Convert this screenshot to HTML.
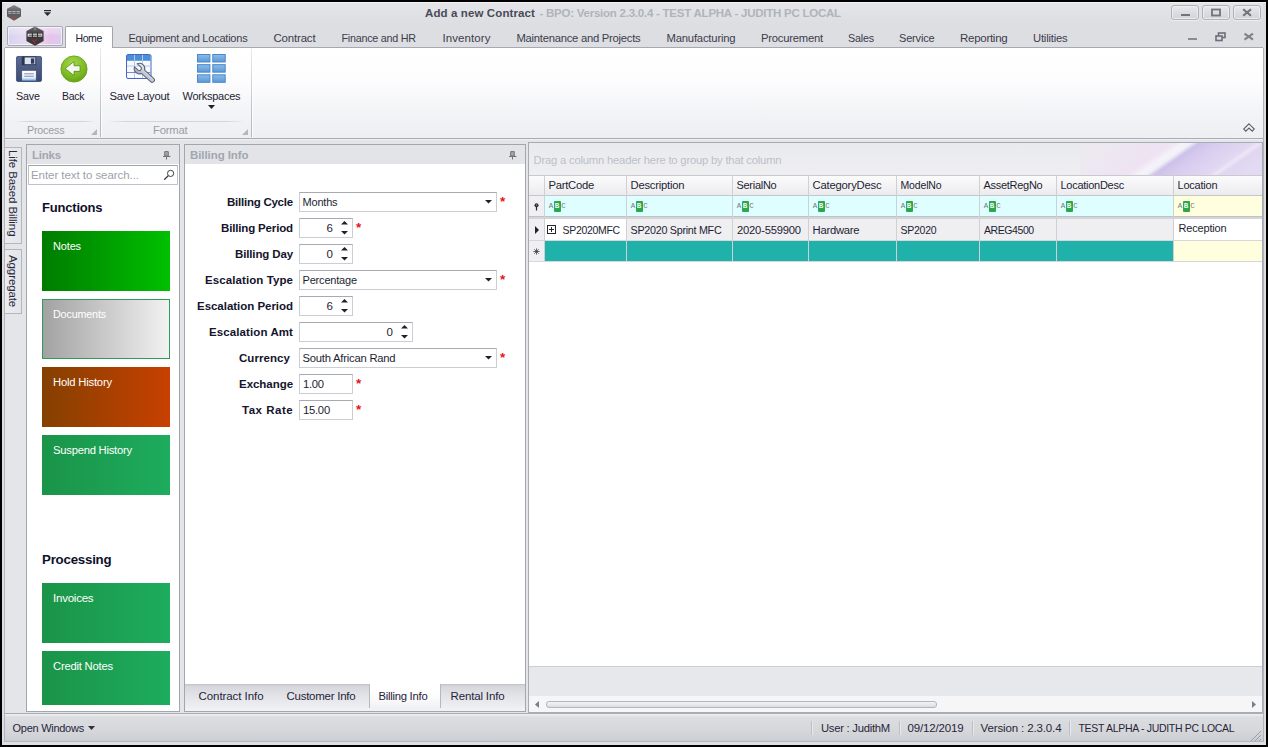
<!DOCTYPE html>
<html><head><meta charset="utf-8"><title>Add a new Contract - BPO</title>
<style>
html,body{margin:0;padding:0;}
body{width:1268px;height:747px;background:#000;overflow:hidden;position:relative;font-family:"Liberation Sans",sans-serif;}
.t{position:absolute;white-space:nowrap;font-family:"Liberation Sans",sans-serif;}
svg{position:absolute;overflow:visible}
</style></head><body>
<div style="position:absolute;left:2px;top:2px;width:1264px;height:743px;background:#dddee2;"></div>
<div style="position:absolute;left:2px;top:2px;width:1264px;height:1px;background:#f2f2f4;"></div>
<div style="position:absolute;left:4px;top:48px;width:1px;height:694px;background:#b2b4bb;"></div>
<div style="position:absolute;left:1263px;top:48px;width:1px;height:694px;background:#b2b4bb;"></div>
<div style="position:absolute;left:2px;top:742px;width:1264px;height:3px;background:#dfe0e4;"></div>
<div style="position:absolute;left:5px;top:3px;width:1258px;height:24px;background:linear-gradient(180deg,#e4e5e8,#dcdde1);"></div>
<svg style="left:5px;top:4px" width="18" height="18" viewBox="0 0 18 18"><defs><linearGradient id="hx" x1="0" y1="0" x2="0" y2="1"><stop offset="0" stop-color="#8e8e90"/><stop offset=".45" stop-color="#5a5a5c"/><stop offset=".6" stop-color="#5c5c5e"/><stop offset="1" stop-color="#745c5a"/></linearGradient></defs><polygon points="9,1 16,4.8 16,12.6 9,16.8 2,12.6 2,4.8" fill="url(#hx)"/><rect x="3.2" y="7.3" width="3.4" height="2.2" fill="#d8d8da"/><rect x="7.3" y="7.3" width="3.4" height="2.2" fill="#d8d8da"/><rect x="11.4" y="7.3" width="3.4" height="2.2" fill="#d8d8da"/><rect x="3.2" y="8" width="11.6" height=".8" fill="#5a5a5c"/><path d="M7.5 12 L9 13.6 L10.5 11.8" stroke="#a8483c" stroke-width="1" fill="none"/></svg>
<svg style="left:43px;top:9px" width="9" height="8" viewBox="0 0 9 8"><rect x="1" y="1" width="7" height="1.2" fill="#26262e"/><polygon points="1,3.2 8,3.2 4.5,7" fill="#26262e"/></svg>
<div class="t" style="left:425px;top:5.5px;height:14px;line-height:14px;font-size:11.5px;font-weight:bold;color:#4a4a58;letter-spacing:0.116px;">Add a new Contract</div>
<div class="t" style="left:539.5px;top:5.5px;height:14px;line-height:14px;font-size:11.5px;font-weight:bold;color:#b0b3bb;letter-spacing:-0.241px;">- BPO: Version 2.3.0.4 - TEST ALPHA - JUDITH PC LOCAL</div>
<div style="position:absolute;left:1171px;top:5px;width:28px;height:15px;border:1px solid #b0b2b9;border-radius:3px;background:linear-gradient(180deg,#e8e9ec,#dcdde1 50%,#d3d4d8);box-sizing:border-box;box-shadow:inset 0 0 0 1px rgba(240,240,243,.8), 0 1px 0 rgba(240,240,243,.8);"></div>
<div style="position:absolute;left:1202px;top:5px;width:28px;height:15px;border:1px solid #b0b2b9;border-radius:3px;background:linear-gradient(180deg,#e8e9ec,#dcdde1 50%,#d3d4d8);box-sizing:border-box;box-shadow:inset 0 0 0 1px rgba(240,240,243,.8), 0 1px 0 rgba(240,240,243,.8);"></div>
<div style="position:absolute;left:1233px;top:5px;width:28px;height:15px;border:1px solid #b0b2b9;border-radius:3px;background:linear-gradient(180deg,#e8e9ec,#dcdde1 50%,#d3d4d8);box-sizing:border-box;box-shadow:inset 0 0 0 1px rgba(240,240,243,.8), 0 1px 0 rgba(240,240,243,.8);"></div>
<svg style="left:1181px;top:14px" width="10" height="4"><rect x="0" y="0" width="9" height="2" fill="#70727c"/></svg>
<svg style="left:1211px;top:8px" width="11" height="9"><rect x="1" y="1.5" width="8" height="6" fill="none" stroke="#70727c" stroke-width="1.8"/></svg>
<svg style="left:1242px;top:8px" width="10" height="9" viewBox="0 0 10 9"><path d="M1.2 1.2 L9 7.8 M9 1.2 L1.2 7.8" stroke="#70727c" stroke-width="2.1"/></svg>
<div style="position:absolute;left:5px;top:27px;width:1258px;height:21px;background:#dddee2;"></div>
<div style="position:absolute;left:5px;top:47px;width:1258px;height:1px;background:#a6a9b1;"></div>
<div style="position:absolute;left:7px;top:26px;width:56px;height:20px;border:1px solid #a8aab2;border-radius:2px;box-sizing:border-box;background:linear-gradient(180deg,rgba(255,255,255,.35) 0%,rgba(255,255,255,.15) 40%,rgba(255,255,255,0) 45%),linear-gradient(95deg,#d8d2f0 0%,#e4daf2 30%,#ecd6f0 55%,#e6c4ea 78%,#dacdf0 100%);box-shadow:inset 0 0 0 1px rgba(255,255,255,.6);"></div>
<svg style="left:25px;top:25px" width="20" height="22" viewBox="0 0 20 22"><defs><linearGradient id="hx2" x1="0" y1="0" x2="0" y2="1"><stop offset="0" stop-color="#6c6c6e"/><stop offset=".4" stop-color="#3e3e40"/><stop offset="1" stop-color="#3c3436"/></linearGradient></defs><polygon points="10,1.4 18.6,6 18.6,16 10,20.8 1.4,16 1.4,6" fill="url(#hx2)"/><rect x="9.6" y="1.6" width=".9" height="4" fill="#9a9a9c"/><rect x="2.2" y="8" width="15.6" height="4.2" fill="#1e1e20"/><rect x="2.6" y="8.6" width="4.3" height="3" fill="#fafafa"/><rect x="7.8" y="8.6" width="4.3" height="3" fill="#fafafa"/><rect x="13" y="8.6" width="4.3" height="3" fill="#fafafa"/><rect x="3.6" y="9.7" width="13" height=".9" fill="#2a2a2c"/><path d="M7 14.5 L9.5 17.5 L11.5 14 M9 18 L10.5 19" stroke="#c02c34" stroke-width=".9" fill="none"/></svg>
<div style="position:absolute;left:65px;top:26px;width:48px;height:22px;background:#fff;border:1px solid #a2a5ad;border-bottom:none;border-radius:2px 2px 0 0;box-sizing:border-box;"></div>
<div class="t" style="left:75.5px;top:31.0px;height:14px;line-height:14px;font-size:10.5px;color:#24243a;letter-spacing:-0.431px;">Home</div>
<div class="t" style="left:128.5px;top:31.0px;height:14px;line-height:14px;font-size:11.0px;color:#3c3c4c;letter-spacing:-0.228px;">Equipment and Locations</div>
<div class="t" style="left:273.5px;top:31.0px;height:14px;line-height:14px;font-size:11.5px;color:#3c3c4c;letter-spacing:-0.195px;">Contract</div>
<div class="t" style="left:341.5px;top:31.0px;height:14px;line-height:14px;font-size:10.75px;color:#3c3c4c;letter-spacing:-0.235px;">Finance and HR</div>
<div class="t" style="left:442.5px;top:31.0px;height:14px;line-height:14px;font-size:11.5px;color:#3c3c4c;letter-spacing:0.082px;">Inventory</div>
<div class="t" style="left:516.5px;top:31.0px;height:14px;line-height:14px;font-size:11.25px;color:#3c3c4c;letter-spacing:-0.258px;">Maintenance and Projects</div>
<div class="t" style="left:666.5px;top:31.0px;height:14px;line-height:14px;font-size:11.25px;color:#3c3c4c;letter-spacing:-0.183px;">Manufacturing</div>
<div class="t" style="left:761px;top:31.0px;height:14px;line-height:14px;font-size:11.25px;color:#3c3c4c;letter-spacing:-0.228px;">Procurement</div>
<div class="t" style="left:848px;top:31.0px;height:14px;line-height:14px;font-size:10.75px;color:#3c3c4c;letter-spacing:-0.198px;">Sales</div>
<div class="t" style="left:899px;top:31.0px;height:14px;line-height:14px;font-size:11.0px;color:#3c3c4c;letter-spacing:-0.181px;">Service</div>
<div class="t" style="left:960px;top:31.0px;height:14px;line-height:14px;font-size:11.5px;color:#3c3c4c;letter-spacing:-0.278px;">Reporting</div>
<div class="t" style="left:1033px;top:31.0px;height:14px;line-height:14px;font-size:11.25px;color:#3c3c4c;letter-spacing:-0.206px;">Utilities</div>
<svg style="left:1188px;top:38px" width="10" height="3"><rect width="9" height="2" fill="#8a8c94"/></svg>
<svg style="left:1215px;top:32px" width="11" height="10" viewBox="0 0 11 10"><rect x="3.5" y="1" width="6.5" height="4.5" fill="none" stroke="#6c6e78" stroke-width="1.6"/><rect x="1" y="4" width="6" height="4.5" fill="#dddee2" stroke="#6c6e78" stroke-width="1.6"/></svg>
<svg style="left:1243px;top:32px" width="11" height="9" viewBox="0 0 11 9"><path d="M1.5 1.6 L10 7.6 M10 1.6 L1.5 7.6" stroke="#80828a" stroke-width="2"/></svg>
<div style="position:absolute;left:5px;top:48px;width:1258px;height:90px;background:linear-gradient(180deg,#ffffff 0%,#fdfdfe 35%,#f1f2f5 80%,#eeeff2 100%);"></div>
<div style="position:absolute;left:5px;top:138px;width:1258px;height:1px;background:#a9acb3;"></div>
<div style="position:absolute;left:5px;top:139px;width:1258px;height:1px;background:#eeeff1;"></div>
<div style="position:absolute;left:100px;top:48px;width:1px;height:89px;background:linear-gradient(180deg,#ececef,#c4c6cc 60%,#b4b6bd);"></div>
<div style="position:absolute;left:101px;top:48px;width:1px;height:89px;background:rgba(255,255,255,.8);"></div>
<div style="position:absolute;left:251px;top:48px;width:1px;height:89px;background:linear-gradient(180deg,#ececef,#c4c6cc 60%,#b4b6bd);"></div>
<div style="position:absolute;left:252px;top:48px;width:1px;height:89px;background:rgba(255,255,255,.8);"></div>
<div style="position:absolute;left:15px;top:121px;width:81px;height:1px;background:linear-gradient(90deg,rgba(200,202,208,0),#d4d5da 15%,#d4d5da 85%,rgba(200,202,208,0));"></div>
<div style="position:absolute;left:106px;top:121px;width:140px;height:1px;background:linear-gradient(90deg,rgba(200,202,208,0),#d4d5da 15%,#d4d5da 85%,rgba(200,202,208,0));"></div>
<div class="t" style="left:27px;top:123.0px;height:14px;line-height:14px;font-size:10.75px;color:#9a9ca6;letter-spacing:-0.205px;">Process</div>
<div class="t" style="left:153px;top:123.0px;height:14px;line-height:14px;font-size:11.25px;color:#9a9ca6;letter-spacing:-0.205px;">Format</div>
<svg style="left:91px;top:129px" width="6" height="6"><polygon points="6,0 6,6 0,6" fill="#b4b6be"/></svg>
<svg style="left:242px;top:129px" width="6" height="6"><polygon points="6,0 6,6 0,6" fill="#b4b6be"/></svg>
<div class="t" style="left:16px;top:89.0px;height:14px;line-height:14px;font-size:10.75px;color:#1e1e32;letter-spacing:-0.143px;">Save</div>
<div class="t" style="left:62px;top:89.0px;height:14px;line-height:14px;font-size:10.5px;color:#1e1e32;letter-spacing:-0.241px;">Back</div>
<div class="t" style="left:109.5px;top:89.0px;height:14px;line-height:14px;font-size:11.25px;color:#1e1e32;letter-spacing:-0.242px;">Save Layout</div>
<div class="t" style="left:182.5px;top:89.0px;height:14px;line-height:14px;font-size:11.0px;color:#1e1e32;letter-spacing:-0.244px;">Workspaces</div>
<svg style="left:208px;top:105px" width="7" height="4"><polygon points="0,0 7,0 3.5,4" fill="#20202a"/></svg>
<svg style="left:1243px;top:123px" width="12" height="10" viewBox="0 0 12 10"><path d="M6 .8 L11.3 6 L9.2 8.2 L6 5 L2.8 8.2 L.7 6 Z" fill="#f4f4f7" stroke="#5e606a" stroke-width="1.1" stroke-linejoin="miter"/></svg>
<svg style="left:16px;top:56px" width="26" height="26" viewBox="0 0 27 27">
<defs><linearGradient id="fl" x1="0" y1="0" x2="0" y2="1"><stop offset="0" stop-color="#5a6a92"/><stop offset="1" stop-color="#3c4a70"/></linearGradient>
<linearGradient id="lb" x1="0" y1="0" x2="0" y2="1"><stop offset="0" stop-color="#ffffff"/><stop offset=".7" stop-color="#e8f0fa"/><stop offset="1" stop-color="#5aa0dc"/></linearGradient></defs>
<rect x="0.5" y="0.5" width="26" height="26" rx="1.5" fill="url(#fl)" stroke="#4a5880"/>
<rect x="6" y="0.5" width="15" height="9" fill="#2c3450"/>
<rect x="9" y="1.5" width="11" height="7" fill="#dfe3ee"/><rect x="15.5" y="2.5" width="3.5" height="5.5" fill="#303a5c"/>
<rect x="6" y="15" width="15" height="11" fill="url(#lb)" stroke="#3a4668" stroke-width=".6"/>
<rect x="8.5" y="18" width="10" height="1" fill="#7a8cb4"/><rect x="8.5" y="20.5" width="10" height="1" fill="#7a8cb4"/>
</svg>
<svg style="left:60px;top:55px" width="28" height="28" viewBox="0 0 30 30">
<defs><radialGradient id="gb" cx=".45" cy=".3" r=".8"><stop offset="0" stop-color="#a6d84a"/><stop offset=".6" stop-color="#7cba24"/><stop offset="1" stop-color="#5a9612"/></radialGradient></defs>
<circle cx="15" cy="15" r="14" fill="url(#gb)" stroke="#6aa41c" stroke-width="1"/>
<path d="M5.5 14.5 L15 7 L15 11.5 L21.5 11.5 L21.5 17.5 L15 17.5 L15 22 Z" fill="#f4f8ec" stroke="#4e8410" stroke-width=".8"/>
</svg>
<svg style="left:125px;top:53px" width="32" height="32" viewBox="0 0 32 32">
<defs><linearGradient id="wr" x1="0" y1="0" x2="0" y2="1"><stop offset="0" stop-color="#e8ecf2"/><stop offset="1" stop-color="#a4acba"/></linearGradient></defs>
<rect x="1.5" y="1.5" width="24.5" height="24" rx="1.5" fill="#f6f9fd" stroke="#4c62c2"/>
<rect x="2" y="2" width="23.5" height="5.8" fill="#4a90d8"/>
<path d="M2 13H25.5 M9.5 2V25 M17.5 2V25" stroke="#b8c8e6" stroke-width="1"/>
<path d="M2 19.5H25.5" stroke="#8288d4" stroke-width="1"/>
<g transform="translate(14.5 15.6) rotate(42)">
<path d="M-4.87 -2.1 L-0.3 -2.1 A2.1 2.1 0 0 1 -0.3 2.1 L-4.87 2.1 A5.3 5.3 0 0 0 4.77 2.3 L17 2.3 A2.3 2.3 0 0 0 17 -2.3 L4.77 -2.3 A5.3 5.3 0 0 0 -4.87 -2.1 Z" fill="url(#wr)" stroke="#5a6272" stroke-width="1"/>
</g>
</svg>
<svg style="left:197px;top:54px" width="29" height="29" viewBox="0 0 29 29"><defs><linearGradient id="wt" x1="0" y1="0" x2="0" y2="1"><stop offset="0" stop-color="#8cbce8"/><stop offset="1" stop-color="#5a98d6"/></linearGradient></defs><rect x="0.5" y="0.5" width="12.4" height="7.5" fill="url(#wt)" stroke="#4a88cc" stroke-width="1"/><rect x="15.8" y="0.5" width="12.4" height="7.5" fill="url(#wt)" stroke="#4a88cc" stroke-width="1"/><rect x="0.5" y="10.65" width="12.4" height="7.5" fill="url(#wt)" stroke="#4a88cc" stroke-width="1"/><rect x="15.8" y="10.65" width="12.4" height="7.5" fill="url(#wt)" stroke="#4a88cc" stroke-width="1"/><rect x="0.5" y="20.8" width="12.4" height="7.5" fill="url(#wt)" stroke="#4a88cc" stroke-width="1"/><rect x="15.8" y="20.8" width="12.4" height="7.5" fill="url(#wt)" stroke="#4a88cc" stroke-width="1"/></svg>
<div style="position:absolute;left:5px;top:140px;width:1258px;height:573px;background:#e4e5e9;"></div>
<div style="position:absolute;left:5px;top:147px;width:17px;height:97px;border:1px solid #b4b6be;border-left:none;box-sizing:border-box;background:linear-gradient(90deg,#ebecef,#e4e5e9);"></div>
<div style="position:absolute;left:5px;top:249px;width:17px;height:65px;border:1px solid #b4b6be;border-left:none;box-sizing:border-box;background:linear-gradient(90deg,#ebecef,#e4e5e9);"></div>
<div class="t" style="left:4px;top:150px;width:17px;height:90px;writing-mode:vertical-rl;font-size:11.5px;line-height:17px;color:#2a2a3c;letter-spacing:-0.1px;">Life Based Billing</div>
<div class="t" style="left:4px;top:255px;width:17px;height:56px;writing-mode:vertical-rl;font-size:11.5px;line-height:17px;color:#2a2a3c;letter-spacing:-0.1px;">Aggregate</div>
<div style="position:absolute;left:26px;top:144px;width:154px;height:568px;border:1px solid #a4a6ae;box-sizing:border-box;background:#fff;"></div>
<div style="position:absolute;left:27px;top:145px;width:152px;height:19px;background:#e3e4e8;"></div>
<div class="t" style="left:32px;top:147.5px;height:14px;line-height:14px;font-size:11.5px;font-weight:bold;color:#a2a6b0;letter-spacing:-0.230px;">Links</div>
<svg style="left:163px;top:151px" width="8" height="9" viewBox="0 0 8 9"><path d="M1.7 .6H5.3V5H1.7Z" fill="#a4a6ae" stroke="#72747e" stroke-width="1"/><path d="M0 5.5H7.5M3.5 5.5V8.5" stroke="#72747e" stroke-width="1"/></svg>
<div style="position:absolute;left:28px;top:165px;width:150px;height:20px;border:1px solid #c0c2ca;border-top-color:#a0a2aa;box-sizing:border-box;background:#fff;"></div>
<div class="t" style="left:31px;top:168.0px;height:14px;line-height:14px;font-size:11.5px;color:#a0a2aa;letter-spacing:-0.057px;">Enter text to search...</div>
<svg style="left:163px;top:169px" width="12" height="12" viewBox="0 0 12 12"><circle cx="7.6" cy="4.4" r="3.1" fill="none" stroke="#3c3c48" stroke-width="1"/><path d="M5.2 6.8 L1.2 10.8" stroke="#3c3c48" stroke-width="1.25"/></svg>
<div class="t" style="left:42px;top:198.5px;height:18px;line-height:18px;font-size:13.0px;font-weight:bold;color:#10102a;letter-spacing:-0.188px;">Functions</div>
<div class="t" style="left:42px;top:550.5px;height:18px;line-height:18px;font-size:13.25px;font-weight:bold;color:#10102a;letter-spacing:-0.203px;">Processing</div>
<div style="position:absolute;left:42px;top:231px;width:128px;height:60px;background:linear-gradient(90deg,#007c00,#00c000);"></div>
<div class="t" style="left:53px;top:239.0px;height:14px;line-height:14px;font-size:11.0px;color:#ffffff;letter-spacing:-0.163px;">Notes</div>
<div style="position:absolute;left:42px;top:299px;width:128px;height:60px;background:linear-gradient(90deg,#a2a2a2,#f2f2f2);border:1px solid #2e9a5c;box-sizing:border-box;"></div>
<div class="t" style="left:53px;top:307.0px;height:14px;line-height:14px;font-size:10.75px;color:#ffffff;letter-spacing:-0.161px;">Documents</div>
<div style="position:absolute;left:42px;top:367px;width:128px;height:60px;background:linear-gradient(90deg,#844000,#c84000);"></div>
<div class="t" style="left:53px;top:375.0px;height:14px;line-height:14px;font-size:11.25px;color:#ffffff;letter-spacing:-0.197px;">Hold History</div>
<div style="position:absolute;left:42px;top:435px;width:128px;height:60px;background:linear-gradient(90deg,#1a9448,#1eac5e);"></div>
<div class="t" style="left:53px;top:443.0px;height:14px;line-height:14px;font-size:11.25px;color:#ffffff;letter-spacing:-0.244px;">Suspend History</div>
<div style="position:absolute;left:42px;top:583px;width:128px;height:60px;background:linear-gradient(90deg,#1a9448,#1eac5e);"></div>
<div class="t" style="left:53px;top:591.0px;height:14px;line-height:14px;font-size:11.5px;color:#ffffff;letter-spacing:-0.225px;">Invoices</div>
<div style="position:absolute;left:42px;top:651px;width:128px;height:54px;background:linear-gradient(90deg,#1a9448,#1eac5e);"></div>
<div class="t" style="left:53px;top:659.0px;height:14px;line-height:14px;font-size:11.25px;color:#ffffff;letter-spacing:-0.219px;">Credit Notes</div>
<div style="position:absolute;left:184px;top:144px;width:342px;height:568px;border:1px solid #a4a6ae;box-sizing:border-box;background:#fff;"></div>
<div style="position:absolute;left:185px;top:145px;width:340px;height:19px;background:#e3e4e8;"></div>
<div class="t" style="left:190px;top:147.5px;height:14px;line-height:14px;font-size:11.5px;font-weight:bold;color:#a2a6b0;letter-spacing:-0.078px;">Billing Info</div>
<svg style="left:509px;top:151px" width="8" height="9" viewBox="0 0 8 9"><path d="M1.7 .6H5.3V5H1.7Z" fill="#a4a6ae" stroke="#72747e" stroke-width="1"/><path d="M0 5.5H7.5M3.5 5.5V8.5" stroke="#72747e" stroke-width="1"/></svg>
<div class="t" style="left:227px;top:195.0px;height:14px;line-height:14px;font-size:11.5px;font-weight:bold;color:#14142c;letter-spacing:-0.241px;">Billing Cycle</div>
<div style="position:absolute;left:299px;top:192px;width:198px;height:20px;border:1px solid #cbced4;border-top-color:#a7aab1;box-sizing:border-box;background:#fff;"></div>
<div class="t" style="left:302.5px;top:195.0px;height:14px;line-height:14px;font-size:11.0px;color:#1e1e32;letter-spacing:-0.194px;">Months</div>
<svg style="left:485px;top:199.7px" width="7" height="3.6"><polygon points="0,0 7,0 3.5,3.6" fill="#20202a"/></svg>
<div class="t" style="left:500px;top:195.2px;height:14px;line-height:14px;font-size:13.5px;font-weight:bold;color:#e8141c;">*</div>
<div class="t" style="left:221px;top:221.0px;height:14px;line-height:14px;font-size:11.5px;font-weight:bold;color:#14142c;letter-spacing:-0.156px;">Billing Period</div>
<div style="position:absolute;left:299px;top:218px;width:54px;height:20px;border:1px solid #cbced4;border-top-color:#a7aab1;box-sizing:border-box;background:#fff;"></div>
<div class="t" style="right:935px;top:221.0px;height:14px;line-height:14px;font-size:11.5px;color:#1e1e32;">6</div>
<svg style="left:341px;top:221.2px" width="7" height="3.6"><polygon points="0,3.6 7,3.6 3.5,0" fill="#20202a"/></svg>
<svg style="left:341px;top:230.8px" width="7" height="3.6"><polygon points="0,0 7,0 3.5,3.6" fill="#20202a"/></svg>
<div class="t" style="left:356px;top:221.2px;height:14px;line-height:14px;font-size:13.5px;font-weight:bold;color:#e8141c;">*</div>
<div class="t" style="left:235px;top:247.0px;height:14px;line-height:14px;font-size:11.5px;font-weight:bold;color:#14142c;letter-spacing:-0.135px;">Billing Day</div>
<div style="position:absolute;left:299px;top:244px;width:54px;height:20px;border:1px solid #cbced4;border-top-color:#a7aab1;box-sizing:border-box;background:#fff;"></div>
<div class="t" style="right:935px;top:247.0px;height:14px;line-height:14px;font-size:11.5px;color:#1e1e32;">0</div>
<svg style="left:341px;top:247.2px" width="7" height="3.6"><polygon points="0,3.6 7,3.6 3.5,0" fill="#20202a"/></svg>
<svg style="left:341px;top:256.8px" width="7" height="3.6"><polygon points="0,0 7,0 3.5,3.6" fill="#20202a"/></svg>
<div class="t" style="left:205px;top:273.0px;height:14px;line-height:14px;font-size:11.5px;font-weight:bold;color:#14142c;letter-spacing:0.090px;">Escalation Type</div>
<div style="position:absolute;left:299px;top:270px;width:198px;height:20px;border:1px solid #cbced4;border-top-color:#a7aab1;box-sizing:border-box;background:#fff;"></div>
<div class="t" style="left:302.5px;top:273.0px;height:14px;line-height:14px;font-size:11.0px;color:#1e1e32;letter-spacing:-0.185px;">Percentage</div>
<svg style="left:485px;top:277.7px" width="7" height="3.6"><polygon points="0,0 7,0 3.5,3.6" fill="#20202a"/></svg>
<div class="t" style="left:500px;top:273.2px;height:14px;line-height:14px;font-size:13.5px;font-weight:bold;color:#e8141c;">*</div>
<div class="t" style="left:197px;top:299.0px;height:14px;line-height:14px;font-size:11.5px;font-weight:bold;color:#14142c;letter-spacing:-0.030px;">Escalation Period</div>
<div style="position:absolute;left:299px;top:296px;width:54px;height:20px;border:1px solid #cbced4;border-top-color:#a7aab1;box-sizing:border-box;background:#fff;"></div>
<div class="t" style="right:935px;top:299.0px;height:14px;line-height:14px;font-size:11.5px;color:#1e1e32;">6</div>
<svg style="left:341px;top:299.2px" width="7" height="3.6"><polygon points="0,3.6 7,3.6 3.5,0" fill="#20202a"/></svg>
<svg style="left:341px;top:308.8px" width="7" height="3.6"><polygon points="0,0 7,0 3.5,3.6" fill="#20202a"/></svg>
<div class="t" style="left:209px;top:325.0px;height:14px;line-height:14px;font-size:11.5px;font-weight:bold;color:#14142c;letter-spacing:0.100px;">Escalation Amt</div>
<div style="position:absolute;left:299px;top:322px;width:114px;height:20px;border:1px solid #cbced4;border-top-color:#a7aab1;box-sizing:border-box;background:#fff;"></div>
<div class="t" style="right:875px;top:325.0px;height:14px;line-height:14px;font-size:11.5px;color:#1e1e32;">0</div>
<svg style="left:401px;top:325.2px" width="7" height="3.6"><polygon points="0,3.6 7,3.6 3.5,0" fill="#20202a"/></svg>
<svg style="left:401px;top:334.8px" width="7" height="3.6"><polygon points="0,0 7,0 3.5,3.6" fill="#20202a"/></svg>
<div class="t" style="left:239px;top:351.0px;height:14px;line-height:14px;font-size:11.5px;font-weight:bold;color:#14142c;letter-spacing:0.068px;">Currency</div>
<div style="position:absolute;left:299px;top:348px;width:198px;height:20px;border:1px solid #cbced4;border-top-color:#a7aab1;box-sizing:border-box;background:#fff;"></div>
<div class="t" style="left:302.5px;top:351.0px;height:14px;line-height:14px;font-size:11.25px;color:#1e1e32;letter-spacing:-0.225px;">South African Rand</div>
<svg style="left:485px;top:355.7px" width="7" height="3.6"><polygon points="0,0 7,0 3.5,3.6" fill="#20202a"/></svg>
<div class="t" style="left:500px;top:351.2px;height:14px;line-height:14px;font-size:13.5px;font-weight:bold;color:#e8141c;">*</div>
<div class="t" style="left:239px;top:377.0px;height:14px;line-height:14px;font-size:11.5px;font-weight:bold;color:#14142c;letter-spacing:-0.043px;">Exchange</div>
<div style="position:absolute;left:299px;top:374px;width:54px;height:20px;border:1px solid #cbced4;border-top-color:#a7aab1;box-sizing:border-box;background:#fff;"></div>
<div class="t" style="left:303px;top:377.0px;height:14px;line-height:14px;font-size:11.25px;color:#1e1e32;letter-spacing:-0.255px;">1.00</div>
<div class="t" style="left:356px;top:377.2px;height:14px;line-height:14px;font-size:13.5px;font-weight:bold;color:#e8141c;">*</div>
<div class="t" style="left:242px;top:403.0px;height:14px;line-height:14px;font-size:11.5px;font-weight:bold;color:#14142c;letter-spacing:0.523px;">Tax Rate</div>
<div style="position:absolute;left:299px;top:400px;width:54px;height:20px;border:1px solid #cbced4;border-top-color:#a7aab1;box-sizing:border-box;background:#fff;"></div>
<div class="t" style="left:303px;top:403.0px;height:14px;line-height:14px;font-size:11.25px;color:#1e1e32;letter-spacing:-0.255px;">15.00</div>
<div class="t" style="left:356px;top:403.2px;height:14px;line-height:14px;font-size:13.5px;font-weight:bold;color:#e8141c;">*</div>
<div style="position:absolute;left:185px;top:684px;width:340px;height:27px;background:linear-gradient(180deg,#bfc1c7 0,#d6d7dc 2px,#e3e4e8 45%,#ededf0 80%,#f3f3f5 100%);"></div>
<div style="position:absolute;left:369px;top:684px;width:72px;height:24px;background:linear-gradient(180deg,#fff 0%,#fdfdfe 50%,#f1f1f4 100%);border-left:1px solid #b6b8bf;border-right:1px solid #b6b8bf;box-sizing:border-box;"></div>
<div class="t" style="left:198.5px;top:689.0px;height:14px;line-height:14px;font-size:11.5px;color:#24243a;letter-spacing:-0.067px;">Contract Info</div>
<div class="t" style="left:286.5px;top:689.0px;height:14px;line-height:14px;font-size:11.5px;color:#24243a;letter-spacing:-0.257px;">Customer Info</div>
<div class="t" style="left:378.5px;top:689.0px;height:14px;line-height:14px;font-size:11.25px;color:#24243a;letter-spacing:-0.252px;">Billing Info</div>
<div class="t" style="left:450.5px;top:689.0px;height:14px;line-height:14px;font-size:11.5px;color:#24243a;letter-spacing:-0.154px;">Rental Info</div>
<div style="position:absolute;left:528px;top:142px;width:735px;height:571px;border:1px solid #a8abb3;box-sizing:border-box;background:#fff;"></div>
<div style="position:absolute;left:529px;top:143px;width:733px;height:32px;background:linear-gradient(180deg,#e9eaed,#efeff2);"></div>
<div style="position:absolute;left:1080px;top:143px;width:182px;height:32px;background:linear-gradient(145deg,rgba(235,236,240,0) 0%,rgba(238,230,242,.6) 15%,rgba(238,226,243,1) 40%,rgba(245,243,249,1) 46%,rgba(240,240,246,1) 49%,rgba(206,193,234,1) 52.5%,rgba(215,204,238,1) 60%,rgba(226,216,242,1) 76%,rgba(236,230,246,1) 79%,rgba(224,214,241,1) 82%,rgba(228,220,243,1) 100%);"></div>
<div class="t" style="left:533.5px;top:153.0px;height:14px;line-height:14px;font-size:11.25px;color:#bcbfc8;letter-spacing:-0.199px;">Drag a column header here to group by that column</div>
<div style="position:absolute;left:529px;top:175px;width:733px;height:21px;background:linear-gradient(180deg,#fbfbfc,#ececef);border-top:1px solid #c8cad0;border-bottom:1px solid #c4c6cc;box-sizing:border-box;"></div>
<div style="position:absolute;left:545px;top:196px;width:628px;height:20px;background:#dffeff;"></div>
<div style="position:absolute;left:1174px;top:196px;width:88px;height:20px;background:#ffffe0;"></div>
<div style="position:absolute;left:529px;top:196px;width:15px;height:65px;background:#f0f0f3;"></div>
<div style="position:absolute;left:529px;top:216px;width:733px;height:3px;background:#d4d5d9;border-top:1px solid #c0c2c8;box-sizing:border-box;"></div>
<div style="position:absolute;left:545px;top:219px;width:628px;height:22px;background:#efeff2;"></div>
<div style="position:absolute;left:545px;top:219px;width:81px;height:22px;background:#fff;"></div>
<div style="position:absolute;left:1174px;top:219px;width:88px;height:22px;background:#fff;"></div>
<div style="position:absolute;left:529px;top:240px;width:733px;height:1px;background:#d6d7db;"></div>
<div style="position:absolute;left:545px;top:241px;width:628px;height:20px;background:#20b2aa;"></div>
<div style="position:absolute;left:1174px;top:241px;width:88px;height:20px;background:#ffffe0;"></div>
<div style="position:absolute;left:529px;top:261px;width:733px;height:1px;background:#d6d7db;"></div>
<div style="position:absolute;left:544px;top:175px;width:1px;height:86px;background:#cfd0d5;"></div>
<div style="position:absolute;left:626px;top:175px;width:1px;height:86px;background:#cfd0d5;"></div>
<div style="position:absolute;left:732px;top:175px;width:1px;height:86px;background:#cfd0d5;"></div>
<div style="position:absolute;left:808px;top:175px;width:1px;height:86px;background:#cfd0d5;"></div>
<div style="position:absolute;left:896px;top:175px;width:1px;height:86px;background:#cfd0d5;"></div>
<div style="position:absolute;left:979px;top:175px;width:1px;height:86px;background:#cfd0d5;"></div>
<div style="position:absolute;left:1056px;top:175px;width:1px;height:86px;background:#cfd0d5;"></div>
<div style="position:absolute;left:1173px;top:175px;width:1px;height:86px;background:#cfd0d5;"></div>
<div class="t" style="left:548.5px;top:177.7px;height:14px;line-height:14px;font-size:11.25px;color:#1e1e32;letter-spacing:-0.270px;">PartCode</div>
<div class="t" style="left:548.7px;top:201px;font-size:7.5px;line-height:11px;height:11px;font-family:'Liberation Mono',monospace;color:#6c7c78;">A</div>
<div style="position:absolute;left:553.5px;top:201px;width:7px;height:11px;background:#2ea64e;border-radius:1px;"></div>
<div class="t" style="left:554.8px;top:201px;font-size:7.5px;line-height:11px;height:11px;font-family:'Liberation Mono',monospace;font-weight:bold;color:#eaffea;">B</div>
<div class="t" style="left:561.2px;top:201px;font-size:7.5px;line-height:11px;height:11px;font-family:'Liberation Mono',monospace;color:#6c7c78;">C</div>
<div class="t" style="left:630.5px;top:177.7px;height:14px;line-height:14px;font-size:11.25px;color:#1e1e32;letter-spacing:-0.216px;">Description</div>
<div class="t" style="left:630.7px;top:201px;font-size:7.5px;line-height:11px;height:11px;font-family:'Liberation Mono',monospace;color:#6c7c78;">A</div>
<div style="position:absolute;left:635.5px;top:201px;width:7px;height:11px;background:#2ea64e;border-radius:1px;"></div>
<div class="t" style="left:636.8px;top:201px;font-size:7.5px;line-height:11px;height:11px;font-family:'Liberation Mono',monospace;font-weight:bold;color:#eaffea;">B</div>
<div class="t" style="left:643.2px;top:201px;font-size:7.5px;line-height:11px;height:11px;font-family:'Liberation Mono',monospace;color:#6c7c78;">C</div>
<div class="t" style="left:736.5px;top:177.7px;height:14px;line-height:14px;font-size:11.0px;color:#1e1e32;letter-spacing:-0.291px;">SerialNo</div>
<div class="t" style="left:736.7px;top:201px;font-size:7.5px;line-height:11px;height:11px;font-family:'Liberation Mono',monospace;color:#6c7c78;">A</div>
<div style="position:absolute;left:741.5px;top:201px;width:7px;height:11px;background:#2ea64e;border-radius:1px;"></div>
<div class="t" style="left:742.8px;top:201px;font-size:7.5px;line-height:11px;height:11px;font-family:'Liberation Mono',monospace;font-weight:bold;color:#eaffea;">B</div>
<div class="t" style="left:749.2px;top:201px;font-size:7.5px;line-height:11px;height:11px;font-family:'Liberation Mono',monospace;color:#6c7c78;">C</div>
<div class="t" style="left:812.5px;top:177.7px;height:14px;line-height:14px;font-size:11.25px;color:#1e1e32;letter-spacing:-0.198px;">CategoryDesc</div>
<div class="t" style="left:812.7px;top:201px;font-size:7.5px;line-height:11px;height:11px;font-family:'Liberation Mono',monospace;color:#6c7c78;">A</div>
<div style="position:absolute;left:817.5px;top:201px;width:7px;height:11px;background:#2ea64e;border-radius:1px;"></div>
<div class="t" style="left:818.8px;top:201px;font-size:7.5px;line-height:11px;height:11px;font-family:'Liberation Mono',monospace;font-weight:bold;color:#eaffea;">B</div>
<div class="t" style="left:825.2px;top:201px;font-size:7.5px;line-height:11px;height:11px;font-family:'Liberation Mono',monospace;color:#6c7c78;">C</div>
<div class="t" style="left:900.5px;top:177.7px;height:14px;line-height:14px;font-size:10.5px;color:#1e1e32;letter-spacing:-0.157px;">ModelNo</div>
<div class="t" style="left:900.7px;top:201px;font-size:7.5px;line-height:11px;height:11px;font-family:'Liberation Mono',monospace;color:#6c7c78;">A</div>
<div style="position:absolute;left:905.5px;top:201px;width:7px;height:11px;background:#2ea64e;border-radius:1px;"></div>
<div class="t" style="left:906.8px;top:201px;font-size:7.5px;line-height:11px;height:11px;font-family:'Liberation Mono',monospace;font-weight:bold;color:#eaffea;">B</div>
<div class="t" style="left:913.2px;top:201px;font-size:7.5px;line-height:11px;height:11px;font-family:'Liberation Mono',monospace;color:#6c7c78;">C</div>
<div class="t" style="left:983.5px;top:177.7px;height:14px;line-height:14px;font-size:11.0px;color:#1e1e32;letter-spacing:-0.289px;">AssetRegNo</div>
<div class="t" style="left:983.7px;top:201px;font-size:7.5px;line-height:11px;height:11px;font-family:'Liberation Mono',monospace;color:#6c7c78;">A</div>
<div style="position:absolute;left:988.5px;top:201px;width:7px;height:11px;background:#2ea64e;border-radius:1px;"></div>
<div class="t" style="left:989.8px;top:201px;font-size:7.5px;line-height:11px;height:11px;font-family:'Liberation Mono',monospace;font-weight:bold;color:#eaffea;">B</div>
<div class="t" style="left:996.2px;top:201px;font-size:7.5px;line-height:11px;height:11px;font-family:'Liberation Mono',monospace;color:#6c7c78;">C</div>
<div class="t" style="left:1060.5px;top:177.7px;height:14px;line-height:14px;font-size:11.0px;color:#1e1e32;letter-spacing:-0.274px;">LocationDesc</div>
<div class="t" style="left:1060.7px;top:201px;font-size:7.5px;line-height:11px;height:11px;font-family:'Liberation Mono',monospace;color:#6c7c78;">A</div>
<div style="position:absolute;left:1065.5px;top:201px;width:7px;height:11px;background:#2ea64e;border-radius:1px;"></div>
<div class="t" style="left:1066.8px;top:201px;font-size:7.5px;line-height:11px;height:11px;font-family:'Liberation Mono',monospace;font-weight:bold;color:#eaffea;">B</div>
<div class="t" style="left:1073.2px;top:201px;font-size:7.5px;line-height:11px;height:11px;font-family:'Liberation Mono',monospace;color:#6c7c78;">C</div>
<div class="t" style="left:1177.5px;top:177.7px;height:14px;line-height:14px;font-size:11.0px;color:#1e1e32;letter-spacing:-0.211px;">Location</div>
<div class="t" style="left:1177.7px;top:201px;font-size:7.5px;line-height:11px;height:11px;font-family:'Liberation Mono',monospace;color:#6c7c78;">A</div>
<div style="position:absolute;left:1182.5px;top:201px;width:7px;height:11px;background:#2ea64e;border-radius:1px;"></div>
<div class="t" style="left:1183.8px;top:201px;font-size:7.5px;line-height:11px;height:11px;font-family:'Liberation Mono',monospace;font-weight:bold;color:#eaffea;">B</div>
<div class="t" style="left:1190.2px;top:201px;font-size:7.5px;line-height:11px;height:11px;font-family:'Liberation Mono',monospace;color:#6c7c78;">C</div>
<div class="t" style="left:562.5px;top:223.0px;height:14px;line-height:14px;font-size:10.5px;color:#1e1e32;letter-spacing:-0.307px;">SP2020MFC</div>
<div class="t" style="left:630.5px;top:223.0px;height:14px;line-height:14px;font-size:10.75px;color:#1e1e32;letter-spacing:-0.278px;">SP2020 Sprint MFC</div>
<div class="t" style="left:737px;top:223.0px;height:14px;line-height:14px;font-size:11.25px;color:#1e1e32;letter-spacing:-0.220px;">2020-559900</div>
<div class="t" style="left:812.5px;top:223.0px;height:14px;line-height:14px;font-size:11.25px;color:#1e1e32;letter-spacing:-0.235px;">Hardware</div>
<div class="t" style="left:900.5px;top:223.0px;height:14px;line-height:14px;font-size:10.5px;color:#1e1e32;letter-spacing:-0.248px;">SP2020</div>
<div class="t" style="left:984px;top:223.0px;height:14px;line-height:14px;font-size:10.5px;color:#1e1e32;letter-spacing:-0.415px;">AREG4500</div>
<div class="t" style="left:1178.5px;top:221.0px;height:14px;line-height:14px;font-size:11.0px;color:#1e1e32;letter-spacing:-0.180px;">Reception</div>
<svg style="left:547px;top:225px" width="9" height="9" viewBox="0 0 9 9"><rect x=".5" y=".5" width="8" height="8" fill="#fff" stroke="#26262e"/><path d="M2 4.5H7M4.5 2V7" stroke="#26262e" stroke-width="1"/></svg>
<svg style="left:534px;top:203px" width="5" height="8" viewBox="0 0 5 8"><circle cx="2.5" cy="2.2" r="2" fill="#2c2c34"/><circle cx="2.5" cy="2" r=".7" fill="#9a9aa2"/><rect x="1.9" y="3.5" width="1.2" height="4" fill="#2c2c34"/></svg>
<svg style="left:535px;top:226px" width="4" height="8"><polygon points="0,0 4,4 0,8" fill="#20202a"/></svg>
<svg style="left:533px;top:248px" width="7" height="7" viewBox="0 0 9 9"><path d="M4.5 .5V8.5M.5 4.5H8.5M1.7 1.7L7.3 7.3M7.3 1.7L1.7 7.3" stroke="#3a3a44" stroke-width="1"/></svg>
<div style="position:absolute;left:529px;top:666px;width:733px;height:30px;background:#e7e8ec;border-top:1px solid #cdced3;box-sizing:border-box;"></div>
<div style="position:absolute;left:529px;top:696px;width:733px;height:16px;background:#f6f6f8;"></div>
<div style="position:absolute;left:546px;top:701px;width:391px;height:7px;border:1px solid #b4b6be;border-radius:3px;box-sizing:border-box;background:linear-gradient(180deg,#f4f4f6,#dcdde1);"></div>
<svg style="left:535px;top:701px" width="4" height="7"><polygon points="4,0 4,7 0,3.5" fill="#7a7c86"/></svg>
<svg style="left:1252px;top:701px" width="4" height="7"><polygon points="0,0 0,7 4,3.5" fill="#7a7c86"/></svg>
<div style="position:absolute;left:5px;top:713px;width:1258px;height:29px;background:linear-gradient(180deg,#f0f0f2 0%,#dcdde1 12%,#d6d7db 60%,#cccdd2 100%);border-top:1px solid #a9acb3;box-sizing:border-box;"></div>
<div style="position:absolute;left:5px;top:741px;width:1258px;height:1px;background:#b4b6bd;"></div>
<div class="t" style="left:12.5px;top:721.0px;height:14px;line-height:14px;font-size:11.0px;color:#26263a;letter-spacing:-0.268px;">Open Windows</div>
<svg style="left:88px;top:726px" width="7" height="4"><polygon points="0,0 7,0 3.5,4" fill="#30303a"/></svg>
<div style="position:absolute;left:811px;top:721px;width:1px;height:14px;background:#bcbec5;"></div>
<div style="position:absolute;left:812px;top:721px;width:1px;height:14px;background:#e8e9ec;"></div>
<div style="position:absolute;left:899px;top:721px;width:1px;height:14px;background:#bcbec5;"></div>
<div style="position:absolute;left:900px;top:721px;width:1px;height:14px;background:#e8e9ec;"></div>
<div style="position:absolute;left:972px;top:721px;width:1px;height:14px;background:#bcbec5;"></div>
<div style="position:absolute;left:973px;top:721px;width:1px;height:14px;background:#e8e9ec;"></div>
<div style="position:absolute;left:1069px;top:721px;width:1px;height:14px;background:#bcbec5;"></div>
<div style="position:absolute;left:1070px;top:721px;width:1px;height:14px;background:#e8e9ec;"></div>
<div class="t" style="left:821px;top:721.0px;height:14px;line-height:14px;font-size:11.25px;color:#26263a;letter-spacing:-0.261px;">User : JudithM</div>
<div class="t" style="left:907.5px;top:721.0px;height:14px;line-height:14px;font-size:11.5px;color:#26263a;letter-spacing:-0.163px;">09/12/2019</div>
<div class="t" style="left:980.5px;top:721.0px;height:14px;line-height:14px;font-size:11.5px;color:#26263a;letter-spacing:-0.128px;">Version : 2.3.0.4</div>
<div class="t" style="left:1078.5px;top:721.0px;height:14px;line-height:14px;font-size:10.5px;color:#26263a;letter-spacing:-0.304px;">TEST ALPHA - JUDITH PC LOCAL</div>
<svg style="left:1250px;top:730px" width="11" height="11" viewBox="0 0 11 11"><path d="M1 11L11 1M5 11L11 5M9 11L11 9" stroke="#9a9ca6" stroke-width="1"/></svg>
</body></html>
